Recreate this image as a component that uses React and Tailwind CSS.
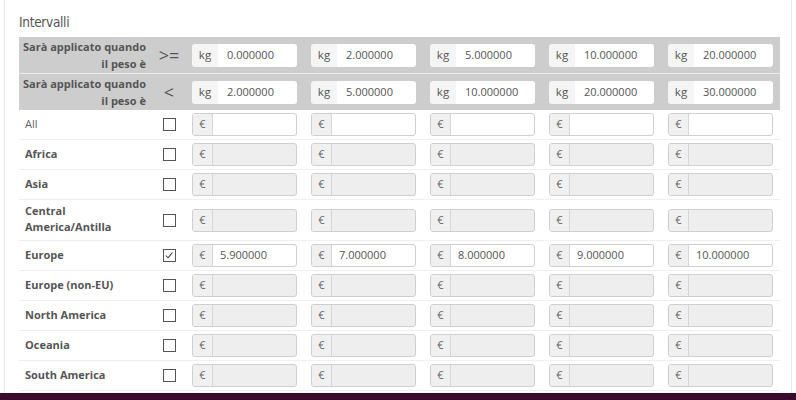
import React from "react";

const ge = ["0.000000", "2.000000", "5.000000", "10.000000", "20.000000"];
const lt = ["2.000000", "5.000000", "10.000000", "20.000000", "30.000000"];

const zones = [
  { name: "All", bold: false, enabled: true, values: ["", "", "", "", ""] },
  { name: "Africa", bold: true },
  { name: "Asia", bold: true },
  { name: "Central America/Antilla", bold: true, tall: true },
  { name: "Europe", bold: true, checked: true, enabled: true, values: ["5.900000", "7.000000", "8.000000", "9.000000", "10.000000"] },
  { name: "Europe (non-EU)", bold: true },
  { name: "North America", bold: true },
  { name: "Oceania", bold: true },
  { name: "South America", bold: true },
];

function KgGroup({ value }) {
  return (
    <div className="flex h-[23px] w-[105px] rounded-[3px] overflow-hidden">
      <div className="w-[26px] flex items-center justify-center bg-[#f5f5f5] text-[11.5px] text-[#555]">kg</div>
      <div className="flex-1 bg-white flex items-center pl-[9px] text-[11px] text-[#555]">{value}</div>
    </div>
  );
}

function EuroGroup({ value, enabled }) {
  return (
    <div className={`flex h-[23px] w-[105px] rounded-[3px] border border-[#cfcfcf] overflow-hidden ${enabled ? "bg-white" : "bg-[#eeeeee]"}`}>
      <div className="w-[20px] flex items-center justify-center bg-[#f0f0f0] border-r border-[#d6d6d6] text-[11px] text-[#666]">€</div>
      <div className="flex-1 flex items-center pl-[7px] text-[11px] text-[#555]">{value}</div>
    </div>
  );
}

function Checkbox({ checked }) {
  return (
    <span className="block w-[13px] h-[13px] border border-[#555] bg-white relative">
      {checked && (
        <svg viewBox="0 0 13 13" className="absolute inset-0 w-[11px] h-[11px]">
          <path d="M2 6.5 L4.8 9.2 L10 3" fill="none" stroke="#333" strokeWidth="1.2" />
        </svg>
      )}
    </span>
  );
}

function HeaderRow({ op, values }) {
  return (
    <div className="flex h-[36px] bg-[#cdcdcd] items-center">
      <div className="w-[134px] pr-[7px] text-right font-bold text-[11px] leading-[17px] text-[#555] whitespace-nowrap">
        Sarà applicato quando
        <br />
        il peso è
      </div>
      <div className="w-[32px] flex justify-center text-[18px] text-[#555] leading-none">{op}</div>
      {values.map((v, i) => (
        <div key={i} className="w-[119px] pl-[7px]">
          <KgGroup value={v} />
        </div>
      ))}
    </div>
  );
}

export default function App() {
  return (
    <div className="w-[796px] h-[400px] bg-white flex flex-col" style={{ fontFamily: '"Open Sans", "Liberation Sans", sans-serif' }}>
      <div className="h-[393px] mx-[4px] border-l border-r border-[#e8e8e8] pl-[14px] pr-[11px] flex flex-col overflow-hidden">
        <div className="h-[37px] pt-[14px] text-[#555] leading-[16px]" style={{ fontFamily: '"DejaVu Sans Condensed", "Liberation Sans", sans-serif', fontSize: "13.5px", letterSpacing: "-0.3px" }}>
          Intervalli
        </div>
        <HeaderRow op=">=" values={ge} />
        <div className="h-[1px] bg-[#ececec]" />
        <HeaderRow op="<" values={lt} />
        {zones.map((z, idx) => (
          <div key={idx} className={`flex items-center border-b border-[#eef0f0] ${z.tall ? "h-[41px]" : "h-[30px]"}`}>
            <div className={`w-[134px] pl-[6px] pr-[8px] leading-[16px] mb-[2px] ${z.bold ? "font-bold text-[11px] text-[#555]" : "text-[11px] text-[#666]"}`}>{z.name}</div>
            <div className="w-[32px] flex justify-center">
              <Checkbox checked={z.checked} />
            </div>
            {[0, 1, 2, 3, 4].map((i) => (
              <div key={i} className="w-[119px] pl-[7px]">
                <EuroGroup value={z.values ? z.values[i] : ""} enabled={!!z.enabled} />
              </div>
            ))}
          </div>
        ))}
      </div>
      <div className="h-[7px] bg-[#3a0b2d]" />
    </div>
  );
}
